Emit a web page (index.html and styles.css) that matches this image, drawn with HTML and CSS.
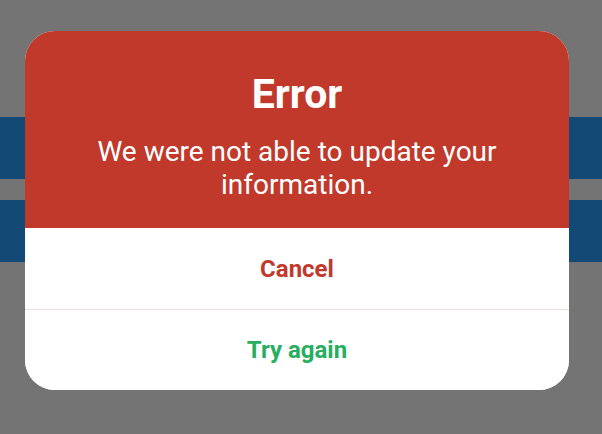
FILE: index.html
```html
<!DOCTYPE html>
<html>
<head>
<meta charset="utf-8">
<link rel="stylesheet" href="styles.css">
</head>
<body>
<div class="page">
  <div class="bar"></div>
  <div class="bar"></div>
</div>
<div class="overlay">
  <div class="dialog">
    <div class="header">
      <h1 class="title">Error</h1>
      <p class="message">We were not able to update your information.</p>
    </div>
    <button class="action cancel">Cancel</button>
    <button class="action retry">Try again</button>
  </div>
</div>
</body>
</html>
```

FILE: styles.css
```css
html, body {
  margin: 0;
  padding: 0;
  height: 100%;
  background: #747474;
  font-family: Roboto, "Liberation Sans", sans-serif;
  overflow: hidden;
}
.page {
  padding-top: 117px;
  display: flex;
  flex-direction: column;
  gap: 21px;
}
.bar {
  height: 62px;
  background: #134a75;
}
.overlay {
  position: fixed;
  inset: 0;
}
.dialog {
  margin: 31px 0 0 25px;
  width: 544px;
  border-radius: 30px;
  overflow: hidden;
  background: #fff;
  display: flex;
  flex-direction: column;
}
.header {
  background: #c0392b;
  color: #fff;
  text-align: center;
  padding: 40px 30px 27px;
}
.title {
  margin: 0;
  font-size: 41px;
  line-height: 47px;
  font-weight: 700;
}
.message {
  margin: 18px 0 0;
  font-size: 28px;
  line-height: 32.5px;
  font-weight: 400;
}
.action {
  display: block;
  border: 0;
  background: #fff;
  font-family: inherit;
  font-size: 24px;
  font-weight: 700;
  line-height: 28px;
  padding: 0;
  text-align: center;
}
.cancel {
  height: 81px;
  color: #c0392b;
  border-bottom: 1px solid #f0dbd9;
  box-sizing: content-box;
}
.retry {
  height: 80px;
  color: #27ae60;
}
```
